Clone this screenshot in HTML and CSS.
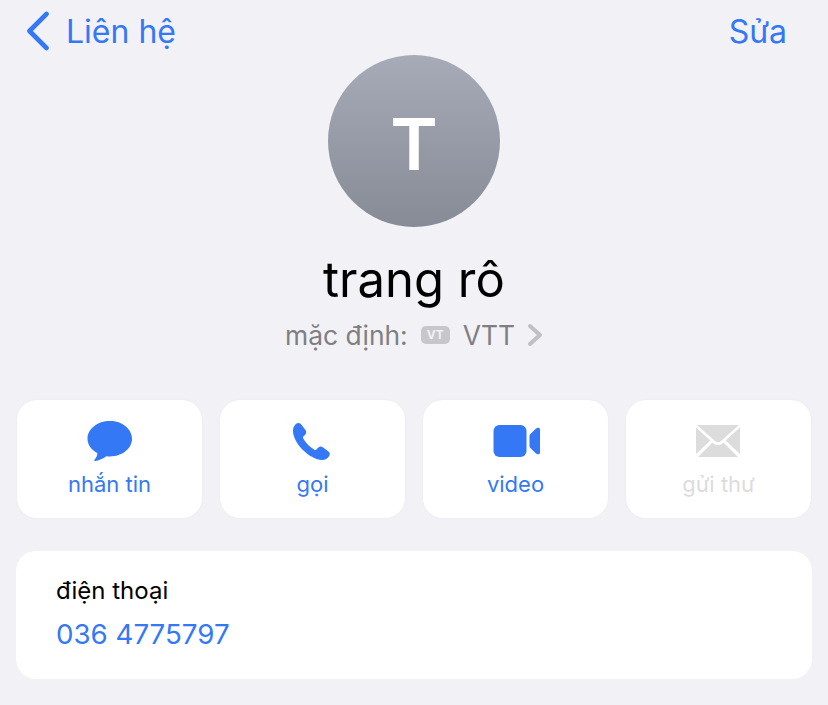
FILE: index.html
```html
<!DOCTYPE html>
<html lang="vi">
<head>
    <meta charset="UTF-8">
    <meta name="viewport" content="width=device-width, initial-scale=1.0">
    <title>trang rô</title>
    <link rel="stylesheet" href="styles.css">
</head>
<body>
    <div class="navBar">
        <div class="backLink">
            <svg class="backIcon" width="24" height="40" viewBox="0 0 24 40">
                <path d="M20.5 3 L3.5 20 L20.5 37" fill="none" stroke="#3478f6" stroke-width="4.6" stroke-linecap="round" stroke-linejoin="round"/>
            </svg>
            <span>Liên hệ</span>
        </div>
        <div class="editLink">Sửa</div>
    </div>

    <div class="profile">
        <div class="avatar">T</div>
        <h1 class="name">trang rô</h1>
        <div class="defaultLine">
            <span>mặc định:</span>
            <span class="simBadge">VT</span>
            <span>VTT</span>
            <svg class="chevron" width="16" height="24" viewBox="0 0 16 24">
                <path d="M3 3 L13 12 L3 21" fill="none" stroke="#bfbfc4" stroke-width="4" stroke-linecap="round" stroke-linejoin="round"/>
            </svg>
        </div>
    </div>

    <div class="actions">
        <div class="actionCard">
            <svg class="actionIcon" width="48" height="46" viewBox="0 0 48 46">
                <path d="M24 3 C36 3 46 10.800 46 20.700 C46 30.600 36 38.400 24 38.400 C22.800 38.400 21.500 38.300 20.300 38.200 C17.500 40.600 12.800 42.400 9 43 C8.200 43.100 7.900 42.300 8.400 41.800 C9.900 40.200 11.600 37.500 11.300 35 C5.300 31.800 1.500 26.700 1.500 20.700 C1.500 10.800 11.500 3 24 3 Z" fill="#3478f6"/>
            </svg>
            <span class="actionLabel">nhắn tin</span>
        </div>
        <div class="actionCard">
            <svg class="actionIcon" width="48" height="46" viewBox="0 0 48 46">
                <path transform="translate(-4.500 1.500)" d="M12 4 C13.600 3 15.300 3.300 16.300 4.500 L21 10.500 C22.100 12 21.900 13.700 20.800 14.900 L18.800 17 C18.300 17.600 18.300 18.300 18.700 19 C20 21.200 21.600 23.300 23.500 25.300 C25.500 27.300 27.600 29 29.900 30.300 C30.600 30.700 31.400 30.600 31.900 30.100 L33.900 28.100 C35.200 26.900 36.900 26.800 38.300 27.800 L44 32 C45.400 33.100 45.700 34.900 44.700 36.400 C43 39.100 40.700 40.400 37.700 40.400 C31.300 40.400 24.300 36.300 18.400 30.500 C12.500 24.500 8.500 17.600 8.500 11.200 C8.500 8.200 9.700 5.800 12 4 Z" fill="#3478f6"/>
            </svg>
            <span class="actionLabel">gọi</span>
        </div>
        <div class="actionCard">
            <svg class="actionIcon" width="48" height="46" viewBox="0 0 48 46">
                <g transform="translate(1.500 1)">
                    <rect x="0" y="6" width="33" height="32" rx="6" fill="#3478f6"/>
                    <path d="M36 17 C36 16.200 36.300 15.600 36.900 15.100 L42.500 9.500 C43.800 8.400 46.500 8.300 46.500 10.500 L46.500 33.500 C46.500 35.700 43.800 35.600 42.500 34.500 L36.900 28.900 C36.300 28.400 36 27.800 36 27 Z" fill="#3478f6"/>
                </g>
            </svg>
            <span class="actionLabel">video</span>
        </div>
        <div class="actionCard disabled">
            <svg class="actionIcon" width="48" height="46" viewBox="0 0 48 46">
                <g transform="translate(-1 1)">
                    <path d="M3 6 L45 6 L27 22 C25.200 23.600 22.800 23.600 21 22 Z" fill="#dcdcdc"/>
                    <path d="M2 8.500 L16.500 21.500 L2 35 Z" fill="#dcdcdc"/>
                    <path d="M46 8.500 L31.500 21.500 L46 35 Z" fill="#dcdcdc"/>
                    <path d="M4 38 L18.500 23.500 L19.500 24.500 C22 26.800 26 26.800 28.500 24.500 L29.500 23.500 L44 38 Z" fill="#dcdcdc"/>
                </g>
            </svg>
            <span class="actionLabel">gửi thư</span>
        </div>
    </div>

    <div class="phoneCard">
        <div class="phoneLabel">điện thoại</div>
        <div class="phoneNumber">036 4775797</div>
    </div>
</body>
</html>
```

FILE: styles.css
```css
body {
    font-family: Inter, 'Noto Sans', 'Liberation Sans', sans-serif;
    background-color: #f1f1f6;
    margin: 0;
    padding: 0;
    height: 705px;
    overflow: hidden;
}

.navBar {
    display: flex;
    justify-content: space-between;
    align-items: center;
    height: 62px;
    margin-bottom: -7px;
    padding: 0 41px 0 26px;
    color: #3478f6;
    font-size: 32px;
}

.backLink {
    display: flex;
    align-items: center;
    gap: 16px;
}

.backIcon {
    display: block;
}

.profile {
    display: flex;
    flex-direction: column;
    align-items: center;
}

.avatar {
    width: 172px;
    height: 172px;
    border-radius: 50%;
    background: linear-gradient(#a6abb7, #868b96);
    color: #ffffff;
    font-size: 72px;
    font-weight: 600;
    line-height: 177px;
    text-align: center;
}

.name {
    margin: 20px 0 0 0;
    font-size: 49px;
    font-weight: 400;
    line-height: 66px;
    color: #000000;
}

.defaultLine {
    display: flex;
    align-items: center;
    height: 34px;
    margin-top: 5px;
    font-size: 26.400px;
    color: #7f7f83;
}

.simBadge {
    margin: 0 13px;
    padding: 0 6px;
    height: 18px;
    line-height: 18px;
    border-radius: 5px;
    background-color: #c6c6cb;
    color: #f1f1f6;
    font-size: 12px;
    font-weight: 700;
}

.chevron {
    margin-left: 12px;
}

.actions {
    display: grid;
    grid-template-columns: repeat(4, 185px);
    gap: 18px;
    margin: 48px 0 0 17px;
}

.actionCard {
    display: flex;
    flex-direction: column;
    align-items: center;
    height: 118px;
    border-radius: 20px;
    background-color: #ffffff;
    box-shadow: 0 0 3px rgba(0, 0, 0, 0.04);
    color: #3478f6;
}

.actionIcon {
    margin-top: 18px;
}

.actionLabel {
    margin-top: 5px;
    font-size: 22px;
    line-height: 30px;
}

.disabled {
    color: #dcdcdc;
}

.phoneCard {
    width: 796px;
    height: 128px;
    box-sizing: border-box;
    margin: 33px 0 0 16px;
    padding: 24px 0 0 40px;
    border-radius: 20px;
    background-color: #ffffff;
}

.phoneLabel {
    font-size: 24px;
    line-height: 32px;
    color: #000000;
}

.phoneNumber {
    margin-top: 10px;
    font-size: 27.700px;
    line-height: 34px;
    color: #3478f6;
}
```
